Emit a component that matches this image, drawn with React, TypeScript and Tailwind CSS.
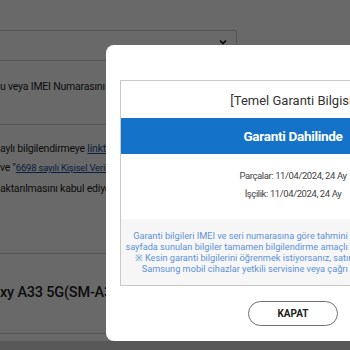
import React from "react";

export default function App() {
  return (
    <div className="relative h-[350px] w-[350px] overflow-hidden bg-white font-['Roboto',sans-serif]">
      {/* background page */}
      <div className="flex h-full flex-col text-[#1f1f1f]">
        <div className="h-[30px] shrink-0" />
        <div className="flex h-[31px] w-[237px] shrink-0 items-center justify-end border-y border-r border-[#cfcfcf] pr-[9px]">
          <svg width="8" height="6" viewBox="0 0 8 6" className="mt-[-8px]">
            <polyline points="1,1.5 4,4.5 7,1.5" fill="none" stroke="#111" strokeWidth="1.6" />
          </svg>
        </div>
        <div className="h-[64px] shrink-0 border-b border-[#cfcfcf] pt-[18px] text-[10.5px] leading-[16px] tracking-[-0.2px] whitespace-nowrap">
          u veya IMEI Numarasını çevirin
        </div>
        <div className="flex h-[129px] shrink-0 flex-col border-b border-[#cfcfcf] pt-[16px] text-[10.5px] leading-[16px] tracking-[-0.2px] whitespace-nowrap">
          <p>
            aylı bilgilendirmeye <span className="text-[#1b4f9c] underline">linkten</span> ulaşabilirsiniz
          </p>
          <p className="mt-[3px]">
            ve "<span className="text-[9.5px] text-[#1b4f9c] underline">6698 sayılı Kişisel Verilerin Korunması</span>
          </p>
          <p className="mt-[5px]">aktarılmasını kabul ediyorum</p>
        </div>
        <div className="h-[80px] shrink-0 border-b border-[#cfcfcf] pt-[29px] text-[14.5px] font-medium leading-[20px] tracking-[-0.2px] whitespace-nowrap">
          xy A33 5G(SM-A336B)
        </div>
        <div className="h-[7px] shrink-0" />
        <div className="flex-1 bg-[#d6d6d6]" />
      </div>

      {/* overlay */}
      <div className="absolute inset-0 bg-black/[0.59]" />

      {/* modal */}
      <div className="absolute left-[106px] top-[45px] flex h-[296px] w-[374px] flex-col rounded-[8px] bg-white px-[14px] pt-[35px]">
        <div className="flex flex-col border border-[#c9c9c9]">
          <div className="flex h-[37px] items-center justify-center pt-[2px] text-[13px] text-[#333]">
            [Temel Garanti Bilgisi]
          </div>
          <div className="flex h-[36px] items-center justify-center bg-[#1473c9] text-[13.5px] font-bold tracking-[-0.3px] text-white">
            Garanti Dahilinde
          </div>
          <div className="flex h-[65px] flex-col items-center pt-[13px] text-[9.5px] leading-[18px] tracking-[-0.4px] text-[#444]">
            <p>Parçalar: 11/04/2024, 24 Ay</p>
            <p>İşçilik: 11/04/2024, 24 Ay</p>
          </div>
          <div className="flex h-[66px] flex-col items-center bg-[#f6f6f6] pt-[11px] text-[9.2px] leading-[11px] whitespace-nowrap text-[#5f93d8]">
            <p>Garanti bilgileri IMEI ve seri numarasına göre tahmini olarak hesaplanmıştır. Bu</p>
            <p>sayfada sunulan bilgiler tamamen bilgilendirme amaçlı olup yasal bağlayıcılığı yok.</p>
            <p>※ Kesin garanti bilgilerini öğrenmek istiyorsanız, satın alma faturanızla birlikte</p>
            <p>Samsung mobil cihazlar yetkili servisine veya çağrı merkezine başvurunuz.</p>
          </div>
        </div>
        <div className="mt-[15px] flex justify-center">
          <button className="flex h-[25px] w-[90px] items-center justify-center rounded-full border border-[#6f6f6f] bg-white text-[10px] font-bold text-[#222]">
            KAPAT
          </button>
        </div>
      </div>
    </div>
  );
}
